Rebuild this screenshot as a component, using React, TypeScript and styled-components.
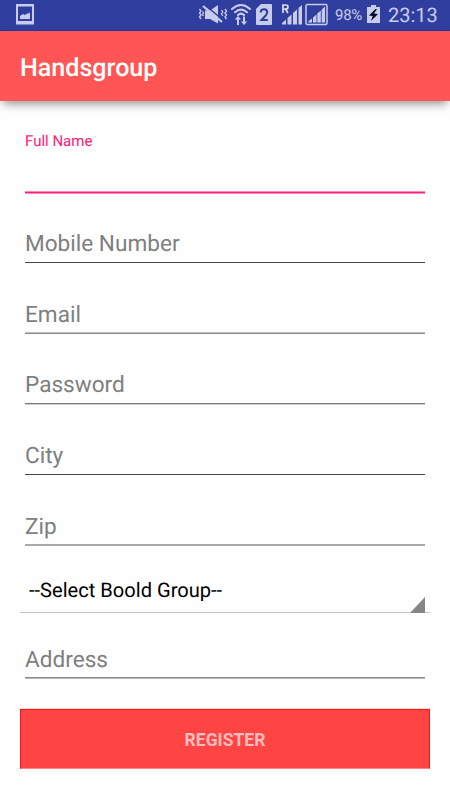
import React from 'react';
import styled, { createGlobalStyle } from 'styled-components';

const GlobalStyle = createGlobalStyle`
  * { box-sizing: border-box; }
  body {
    margin: 0;
    background: #fff;
    font-family: Roboto, "Noto Sans", sans-serif;
    text-rendering: geometricPrecision;
  }
`;

const Screen = styled.div`
  width: 450px;
  height: 800px;
  background: #fefefe;
  overflow: hidden;
`;

const StatusBar = styled.header`
  height: 31px;
  padding: 0 13px 0 16px;
  display: flex;
  align-items: center;
  background: #303f9f;
  border-bottom: 1px solid #24379b;
  color: #c8cdea;
`;

const StatusIcon = styled.svg<{ $gap?: number }>`
  display: block;
  flex: none;
  height: 30px;
  margin-left: ${({ $gap = 0 }) => $gap}px;
  fill: #c8cceb;
`;

const Spacer = styled.div`
  flex: 1;
`;

const Charge = styled.span`
  width: 28px;
  margin-left: 7px;
  font-size: 15px;
  line-height: 30px;
  white-space: nowrap;
  letter-spacing: -0.3px;
`;

const Clock = styled.span`
  width: 49px;
  margin-left: 8px;
  font-size: 20px;
  line-height: 30px;
  white-space: nowrap;
`;

const AppBar = styled.div`
  position: relative;
  height: 70px;
  padding-left: 20px;
  display: flex;
  align-items: center;
  background: #ff5555;
  box-shadow: 0 6px 9px -3px rgba(0, 0, 0, 0.42);
`;

const Title = styled.h1`
  margin: 6px 0 0;
  color: #fff;
  font-size: 25.1px;
  line-height: 32px;
  font-weight: 500;
`;

const Form = styled.form`
  display: flex;
  flex-direction: column;
  padding: 0 20px;
`;

const Field = styled.label<{ $height: number; $gap?: number; $line?: string; $edge?: string }>`
  height: ${({ $height }) => $height}px;
  margin: 0 5px;
  padding-bottom: ${({ $gap = 5 }) => $gap}px;
  display: flex;
  align-items: flex-end;
  border-bottom: 1px solid ${({ $line = '#484848' }) => $line};
  box-shadow: 0 1px ${({ $edge = 'transparent' }) => $edge};
  color: #7f7f7f;
  font-size: 22.6px;
  line-height: 27px;
`;

const ActiveField = styled.label`
  height: 92px;
  margin: 0 5px;
  padding-top: 31px;
  border-bottom: 1px solid #ff1f7c;
  box-shadow: inset 0 -1px #ff8abb, 0 1px #ff8abb;
  color: #ff1a78;
  font-size: 15px;
  line-height: 18px;
`;

const Select = styled.div`
  height: 68px;
  padding: 0 0 9px 9px;
  display: flex;
  align-items: flex-end;
  justify-content: space-between;
  border-bottom: 1px solid #c6c6c6;
  color: #000;
  font-size: 20.1px;
  line-height: 26px;
`;

const Corner = styled.svg`
  display: block;
  width: 15px;
  height: 16px;
  margin: 0 5px -10px 0;
  fill: #858585;
`;

const RegisterButton = styled.button`
  height: 60px;
  margin-top: 31px;
  padding: 2px 0 0;
  border: 1px solid #f91418;
  border-bottom-color: #ff8585;
  background: #ff4444;
  box-shadow: 0 -1px #ffdede;
  color: #ffbdbd;
  font: 700 17.5px/24px Roboto, sans-serif;
`;

const fields = [
  { label: 'Mobile Number', height: 70 },
  { label: 'Email', height: 70, gap: 4, line: '#c0c0c0', edge: '#888' },
  { label: 'Password', height: 71, line: '#777', edge: '#d0d0d0' },
  { label: 'City', height: 71 },
  { label: 'Zip', height: 70, gap: 4, line: '#aaa', edge: '#aaa' },
];

export default function App() {
  return (
    <>
      <GlobalStyle />
      <Screen>
        <StatusBar>
          <StatusIcon width="18" viewBox="0 0 18 30">
            <path fillRule="evenodd" d="M0 4h18v20.500H0zM2 6.500V21h14V6.500z" />
            <path d="M4 19v-3l3-2 2 1 3-2 1 .7 1-1.700v7z" />
          </StatusIcon>
          <Spacer />
          <StatusIcon width="30" viewBox="0 0 30 30">
            <path d="M7 10.500h5l8-5.500v18.500L12 19H7z" />
            <path d="M6.500 4.500l19 16" fill="none" stroke="#303f9f" strokeWidth="1.500" />
            <path d="M5 6l19 16" fill="none" stroke="#c8cceb" strokeWidth="2.200" />
            <path d="M1.500 9l1.500 2-1.500 2 1.500 2-1.500 2 1.500 2M4.500 11.500l1 1.500-1 1.500 1 1.500M27 9l1.500 2-1.500 2 1.500 2-1.500 2 1.500 2M23.500 10l1.300 2-1.300 2 1.300 2" fill="none" stroke="#c8cceb" strokeWidth="1.300" />
          </StatusIcon>
          <StatusIcon width="20" $gap={3} viewBox="0 0 20 30">
            <path d="M1 9Q10 1 19 9M4 12.200Q10 7 16 12.200M7 15Q10 12.300 13 15" fill="none" stroke="#c8cceb" strokeWidth="2.100" strokeLinecap="round" />
            <path d="M7 16l3.200 3.500H8V25H6v-5.500H3.700zM13 25l-3.200-3.500H12V16.500h2v5h2.300z" />
          </StatusIcon>
          <StatusIcon width="16" $gap={5} viewBox="0 0 16 30">
            <path d="M5 4h10q1 0 1 1v19q0 1-1 1H1q-1 0-1-1V9z" />
            <path d="M4.700 12.500Q4.700 9.300 8 9.300q3.200 0 3.200 3 0 1.600-1.700 3.400L5.500 20h6.300" fill="none" stroke="#303f9f" strokeWidth="2" />
          </StatusIcon>
          <StatusIcon width="22" $gap={9} viewBox="0 0 22 30">
            <path d="M2 13V5h2.500Q7 5 7 7t-2.500 2H2M4.500 9L7 13" fill="none" stroke="#dadded" strokeWidth="1.700" />
            <path d="M1 24.500V23l4-3.500v5zM6.500 24.500V18l4-3.500v10zM12 24.500V13l4-3.500v15zM17.500 24.500V8L21 5v19.500z" />
          </StatusIcon>
          <StatusIcon width="23" $gap={2} viewBox="0 0 23 30">
            <rect x="1" y="4.500" width="21" height="20" rx="1.500" fill="none" stroke="#c8cceb" strokeWidth="1.500" />
            <path d="M3.500 22.500V21l3.500-2.500v4zM8 22.500V17.500l3.500-3v8zM12.300 22.500V13.500l3.500-3v12zM16.700 22.500V9.500L20 6.500v16z" />
          </StatusIcon>
          <Charge>98%</Charge>
          <StatusIcon width="13" $gap={4} viewBox="0 0 13 30">
            <path d="M4 5h5v2h4v16H0V7h4z" />
            <path d="M8.500 9L2 15.500l3.700.500L4 21l7-7-4-.500L10 9z" fill="#080b25" />
          </StatusIcon>
          <Clock>23:13</Clock>
        </StatusBar>
        <AppBar>
          <Title>Handsgroup</Title>
        </AppBar>
        <Form>
          <ActiveField>Full Name</ActiveField>
          {fields.map(({ label, height, gap, line, edge }) => (
            <Field key={label} $height={height} $gap={gap} $line={line} $edge={edge}>{label}</Field>
          ))}
          <Select>
            <span>--Select Boold Group--</span>
            <Corner viewBox="0 0 15 16"><path d="M15 0v16H0z" /></Corner>
          </Select>
          <Field $height={65} $gap={4} $line="#8c8c8c" $edge="#b5b5b5">Address</Field>
          <RegisterButton type="button">REGISTER</RegisterButton>
        </Form>
      </Screen>
    </>
  );
}
